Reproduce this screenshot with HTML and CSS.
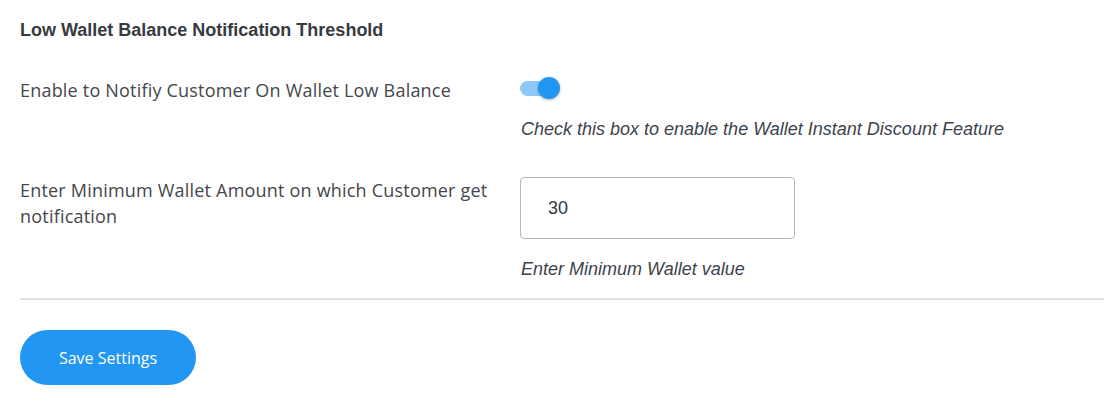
FILE: index.html
```html
<!DOCTYPE html>
<html lang="en">
<head>
    <meta charset="UTF-8">
    <title>Wallet Settings</title>
    <link rel="stylesheet" href="styles.css">
</head>
<body>
    <div class="settings">
        <h2 class="section-title">Low Wallet Balance Notification Threshold</h2>

        <div class="field-row">
            <div class="field-label">Enable to Notifiy Customer On Wallet Low Balance</div>
            <div class="field-control">
                <label class="switch">
                    <input type="checkbox" checked>
                    <span class="track"></span>
                    <span class="knob"></span>
                </label>
                <p class="hint">Check this box to enable the Wallet Instant Discount Feature</p>
            </div>
        </div>

        <div class="field-row">
            <div class="field-label">Enter Minimum Wallet Amount on which Customer get notification</div>
            <div class="field-control">
                <input type="text" class="text-input" value="30">
                <p class="hint hint-input">Enter Minimum Wallet value</p>
            </div>
        </div>

        <hr class="divider">

        <button class="save-btn">Save Settings</button>
    </div>
</body>
</html>
```

FILE: styles.css
```css
body {
    margin: 0;
    background-color: #fff;
    color: #3c434a;
    font-family: "Open Sans", Arial, sans-serif;
}
.settings {
    padding: 19px 0 0 20px;
}
.section-title {
    margin: 0 0 36px;
    font-family: "Liberation Sans", Arial, sans-serif;
    font-size: 18px;
    font-weight: bold;
    color: #363b40;
    line-height: 22px;
}
.field-row {
    display: flex;
    margin-bottom: 37px;
}
.field-label {
    width: 476px;
    padding-right: 24px;
    font-size: 18px;
    letter-spacing: 0.2px;
    line-height: 26px;
    color: #44474b;
}
.field-control {
    flex: 1;
}
.switch {
    position: relative;
    display: block;
    width: 42px;
    height: 26px;
}
.switch input {
    display: none;
}
.track {
    position: absolute;
    left: 0;
    top: 4px;
    width: 36px;
    height: 15px;
    border-radius: 8px;
    background-color: #8ec8f8;
}
.knob {
    position: absolute;
    left: 18px;
    top: 0;
    width: 22px;
    height: 22px;
    border-radius: 50%;
    background-color: #2196f3;
    box-shadow: 0 1px 3px rgba(0,0,0,0.3);
}
.hint {
    margin: 15px 0 0 1px;
    font-family: "Liberation Sans", Arial, sans-serif;
    font-style: italic;
    font-size: 18px;
    line-height: 22px;
    color: #3c434a;
}
.hint-input {
    margin-top: 19px;
}
.text-input {
    display: block;
    box-sizing: border-box;
    width: 275px;
    height: 62px;
    margin: 0;
    padding: 0 27px;
    border: 1px solid #b4b9be;
    border-radius: 4px;
    font-family: "Liberation Sans", Arial, sans-serif;
    font-size: 18px;
    color: #32373c;
}
.divider {
    margin: -19px 0 0;
    border: 0;
    border-top: 2px solid #e2e2e2;
}
.save-btn {
    margin-top: 30px;
    width: 176px;
    height: 55px;
    border: none;
    border-radius: 28px;
    background-color: #2196f3;
    color: #fff;
    font-family: "Open Sans", Arial, sans-serif;
    font-size: 16px;
    font-weight: 500;
    cursor: pointer;
}
```
